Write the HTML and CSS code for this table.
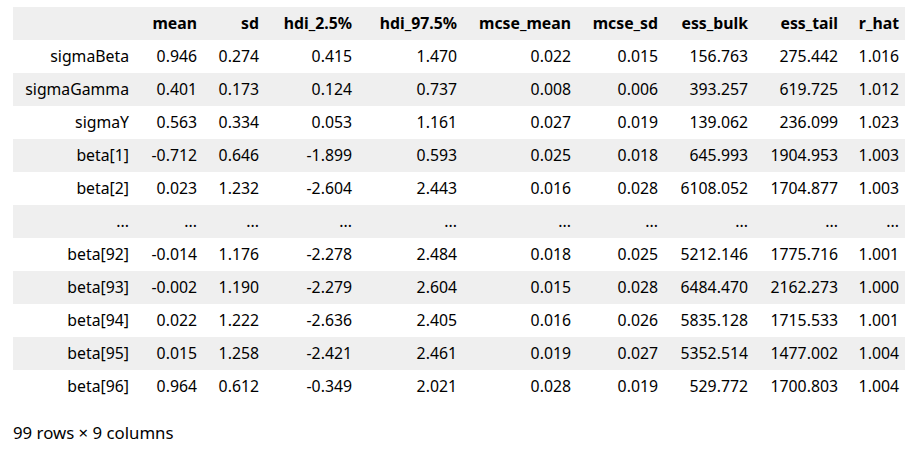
FILE: index.html
```html
<!DOCTYPE html>
<html>
<head>
<meta charset="utf-8">
<link rel="stylesheet" href="styles.css">
</head>
<body>
<div class="output">
<table class="df">
<colgroup>
<col class="c-idx"><col class="c-mean"><col class="c-sd"><col class="c-h25"><col class="c-h975"><col class="c-mm"><col class="c-ms"><col class="c-eb"><col class="c-et"><col class="c-rh">
</colgroup>
<thead>
<tr><th></th><th>mean</th><th>sd</th><th>hdi_2.5%</th><th>hdi_97.5%</th><th>mcse_mean</th><th>mcse_sd</th><th>ess_bulk</th><th>ess_tail</th><th>r_hat</th></tr>
</thead>
<tbody>
<tr><th>sigmaBeta</th><td>0.946</td><td>0.274</td><td>0.415</td><td>1.470</td><td>0.022</td><td>0.015</td><td>156.763</td><td>275.442</td><td>1.016</td></tr>
<tr><th>sigmaGamma</th><td>0.401</td><td>0.173</td><td>0.124</td><td>0.737</td><td>0.008</td><td>0.006</td><td>393.257</td><td>619.725</td><td>1.012</td></tr>
<tr><th>sigmaY</th><td>0.563</td><td>0.334</td><td>0.053</td><td>1.161</td><td>0.027</td><td>0.019</td><td>139.062</td><td>236.099</td><td>1.023</td></tr>
<tr><th>beta[1]</th><td>-0.712</td><td>0.646</td><td>-1.899</td><td>0.593</td><td>0.025</td><td>0.018</td><td>645.993</td><td>1904.953</td><td>1.003</td></tr>
<tr><th>beta[2]</th><td>0.023</td><td>1.232</td><td>-2.604</td><td>2.443</td><td>0.016</td><td>0.028</td><td>6108.052</td><td>1704.877</td><td>1.003</td></tr>
<tr><th>...</th><td>...</td><td>...</td><td>...</td><td>...</td><td>...</td><td>...</td><td>...</td><td>...</td><td>...</td></tr>
<tr><th>beta[92]</th><td>-0.014</td><td>1.176</td><td>-2.278</td><td>2.484</td><td>0.018</td><td>0.025</td><td>5212.146</td><td>1775.716</td><td>1.001</td></tr>
<tr><th>beta[93]</th><td>-0.002</td><td>1.190</td><td>-2.279</td><td>2.604</td><td>0.015</td><td>0.028</td><td>6484.470</td><td>2162.273</td><td>1.000</td></tr>
<tr><th>beta[94]</th><td>0.022</td><td>1.222</td><td>-2.636</td><td>2.405</td><td>0.016</td><td>0.026</td><td>5835.128</td><td>1715.533</td><td>1.001</td></tr>
<tr><th>beta[95]</th><td>0.015</td><td>1.258</td><td>-2.421</td><td>2.461</td><td>0.019</td><td>0.027</td><td>5352.514</td><td>1477.002</td><td>1.004</td></tr>
<tr><th>beta[96]</th><td>0.964</td><td>0.612</td><td>-0.349</td><td>2.021</td><td>0.028</td><td>0.019</td><td>529.772</td><td>1700.803</td><td>1.004</td></tr>
</tbody>
</table>
<p class="shape">99 rows × 9 columns</p>
</div>
</body>
</html>
```
FILE: styles.css
```css
html, body {
  margin: 0;
  padding: 0;
  background: #ffffff;
}
body {
  font-family: "Noto Sans", "Open Sans", sans-serif;
  font-size: 15.8px;
  color: #000000;
}
.output {
  padding: 7px 0 0 13px;
}
.df {
  border-collapse: collapse;
  border-spacing: 0;
  table-layout: fixed;
  width: 892px;
}
.c-idx { width: 122px; }
.c-mean { width: 68px; }
.c-sd { width: 62px; }
.c-h25 { width: 93px; }
.c-h975 { width: 105px; }
.c-mm { width: 114px; }
.c-ms { width: 87px; }
.c-eb { width: 90px; }
.c-et { width: 90px; }
.c-rh { width: 61px; }
.df th, .df td {
  height: 33px;
  padding: 0 6px 0 0;
  text-align: right;
  white-space: nowrap;
  vertical-align: middle;
  line-height: 33px;
  box-sizing: border-box;
}
.df th {
  font-weight: normal;
}
.df thead th {
  font-weight: bold;
  background: #efefef;
}
.df tbody tr:nth-child(even) {
  background: #efefef;
}
.shape {
  margin: 20px 0 0 0;
  font-size: 16.8px;
  line-height: 20px;
}
```
